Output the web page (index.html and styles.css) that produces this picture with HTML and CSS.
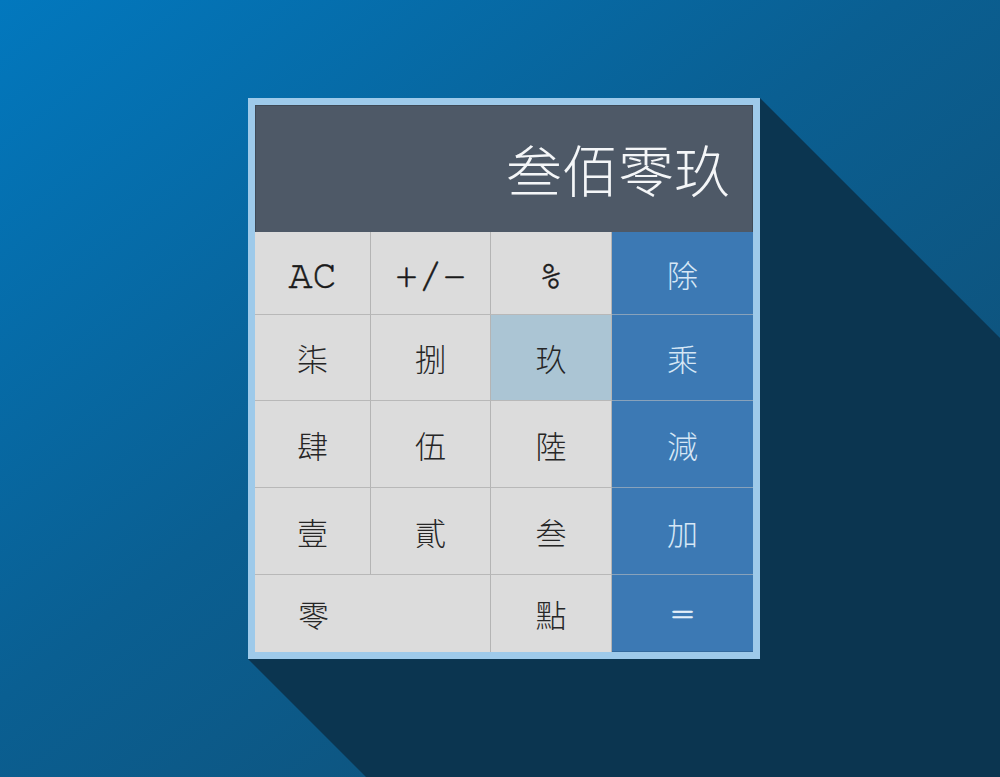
FILE: index.html
```html
<!DOCTYPE html>
<html lang="zh-Hant">
<head>
<meta charset="utf-8">
<title>計算機</title>
<link rel="stylesheet" href="styles.css">
</head>
<body>
<svg class="long-shadow" width="1000" height="777" viewBox="0 0 1000 777" aria-hidden="true">
  <polygon points="760,98 1000,338 1000,777 366,777 248,659" fill="#0b3550"/>
</svg>
<div class="calc">
  <div class="display">叁佰零玖</div>
  <div class="keys">
    <div class="key latin">AC</div>
    <div class="key latin">+/-</div>
    <div class="key latin">%</div>
    <div class="key op">除</div>

    <div class="key">柒</div>
    <div class="key">捌</div>
    <div class="key active">玖</div>
    <div class="key op">乘</div>

    <div class="key">肆</div>
    <div class="key">伍</div>
    <div class="key">陸</div>
    <div class="key op">減</div>

    <div class="key">壹</div>
    <div class="key">貳</div>
    <div class="key">叁</div>
    <div class="key op">加</div>

    <div class="key zero">零</div>
    <div class="key bottom">點</div>
    <div class="key op latin last">=</div>
  </div>
</div>
</body>
</html>
```

FILE: styles.css
```css
html, body {
  margin: 0;
  padding: 0;
}

body {
  width: 1000px;
  height: 777px;
  overflow: hidden;
  position: relative;
  background: linear-gradient(to bottom right, #0278be 0%, #0a5f92 45%, #124a6c 100%);
  font-family: "Noto Sans CJK TC", "Noto Sans CJK SC", sans-serif;
}

.long-shadow {
  position: absolute;
  left: 0;
  top: 0;
}

.calc {
  position: relative;
  margin: 98px 0 0 248px;
  width: 498px;
  border: 7px solid #9ecaea;
  background: #dadada;
}

.display {
  box-sizing: border-box;
  height: 127px;
  background: #4e5967;
  border: 1px solid #3f4955;
  border-bottom: none;
  color: #f4f6f8;
  font-size: 56px;
  font-weight: 300;
  display: flex;
  align-items: center;
  justify-content: flex-end;
  padding: 0 22px 4px 0;
}

.keys {
  display: grid;
  grid-template-columns: 116px 120px 121px 141px;
  grid-template-rows: 83px 86px 87px 87px 77px;
}

.key {
  box-sizing: border-box;
  display: flex;
  align-items: center;
  justify-content: center;
  background: #dcdcdc;
  color: #262626;
  font-size: 31px;
  font-weight: 300;
  border-right: 1px solid #b4b4b4;
  border-bottom: 1px solid #b8b8b8;
}

.latin {
  font-family: "FreeMono", "Liberation Mono", monospace;
  font-weight: 400;
  font-size: 40px;
  color: #1a1a1a;
  -webkit-text-stroke: 0.5px #1a1a1a;
  padding-top: 5px;
}

.active {
  background: #abc5d4;
}

.op {
  background: #3c79b4;
  color: #d6e7f6;
  border-right: none;
  border-bottom: 1px solid #88a2bb;
}

.op.latin {
  color: #e4eff9;
  -webkit-text-stroke: 0.5px #e4eff9;
  padding-top: 2px;
}

.op.last {
  border-bottom: 1px solid #336a9e;
}

.zero {
  grid-column: span 2;
  justify-content: flex-start;
  padding-left: 43px;
  border-bottom: none;
}

.bottom {
  border-bottom: none;
}
```
